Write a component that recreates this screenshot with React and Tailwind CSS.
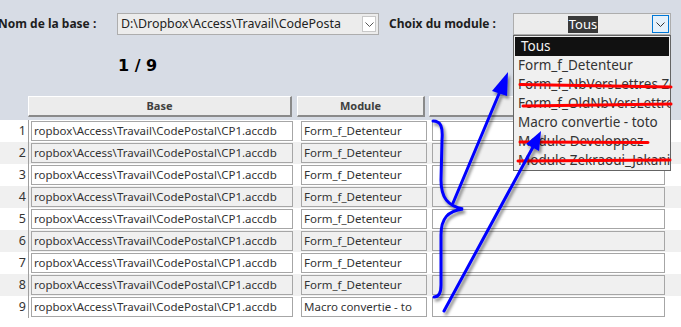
import React from 'react';

const rows = [
  { n: 1, module: 'Form_f_Detenteur' },
  { n: 2, module: 'Form_f_Detenteur' },
  { n: 3, module: 'Form_f_Detenteur' },
  { n: 4, module: 'Form_f_Detenteur' },
  { n: 5, module: 'Form_f_Detenteur' },
  { n: 6, module: 'Form_f_Detenteur' },
  { n: 7, module: 'Form_f_Detenteur' },
  { n: 8, module: 'Form_f_Detenteur' },
  { n: 9, module: 'Macro convertie - to' },
];

const modules = [
  'Tous',
  'Form_f_Detenteur',
  'Form_f_NbVersLettres Zekraoui',
  'Form_f_OldNbVersLettres',
  'Macro convertie - toto',
  'Module Developpez',
  'Module Zekraoui_Jakani',
];

function Chevron({ className }) {
  return (
    <svg width="9" height="5" viewBox="0 0 9 5" className={className}>
      <polyline points="0.5,0.5 4.5,4.5 8.5,0.5" fill="none" stroke="currentColor" strokeWidth="1" />
    </svg>
  );
}

function HeaderButton({ label, className }) {
  return (
    <div
      className={`h-[21px] flex items-center justify-center bg-[#ececec] border-t border-l border-t-white border-l-white border-r-2 border-b-2 border-r-[#8a8a8a] border-b-[#8a8a8a] text-[11px] font-bold text-[#404040] ${className}`}
    >
      {label}
    </div>
  );
}

export default function App() {
  return (
    <div className="relative w-[681px] h-[327px] overflow-hidden bg-white font-['Noto_Sans',sans-serif] text-[#333]">
      {/* Form header */}
      <div className="h-[120px] bg-[#d7dce5] flex flex-col">
        <div className="flex items-center pt-[13px]">
          <span className="-ml-[2px] w-[119px] shrink-0 text-[12px] font-bold text-[#1e1e1e]">Nom de la base :</span>
          <div className="w-[262px] h-[22px] flex items-center bg-[#ececec] border border-[#adadad]">
            <span className="flex-1 pl-[3px] text-[12.4px] text-[#222] whitespace-nowrap">
              D:\Dropbox\Access\Travail\CodePosta
            </span>
            <div className="w-[14px] h-[16px] mr-[2px] flex items-center justify-center bg-white border border-[#c8c8c8] text-[#555]">
              <Chevron />
            </div>
          </div>
          <span className="ml-[10px] w-[124px] shrink-0 text-[12px] font-bold text-[#1e1e1e]">Choix du module :</span>
          <div className="w-[158px] h-[22px] flex items-center bg-[#ececec] border border-[#adadad]">
            <div className="flex-1 flex justify-center">
              <span className="bg-[#3a3a3a] text-white text-[13px] px-[1px] leading-[17px]">Tous</span>
            </div>
            <div className="w-[17px] h-[18px] mr-[1px] flex items-center justify-center bg-[#e5f1fb] border border-[#0078d7] text-[#333]">
              <Chevron />
            </div>
          </div>
        </div>
        <div className="mt-[21px] h-[20px] pl-[118px] flex items-center font-['DejaVu_Sans',sans-serif] text-[16px] font-bold text-black">
          1 / 9
        </div>
        <div className="mt-[20px] flex">
          <HeaderButton label="Base" className="ml-[28px] w-[264px]" />
          <HeaderButton label="Module" className="ml-[5px] w-[128px]" />
          <HeaderButton label="" className="ml-[4px] w-[236px]" />
        </div>
      </div>

      {/* Records */}
      <div className="flex flex-col">
        {rows.map((r) => (
          <div key={r.n} className={`h-[22px] flex ${r.n % 2 === 0 ? 'bg-[#f0f0f0]' : 'bg-white'}`}>
            <div className="w-[29px] shrink-0 border-r border-[#a0a0a0] flex items-center justify-end pr-[2px] text-[12.5px]">
              {r.n}
            </div>
            <div className="ml-[2px] mt-[1px] w-[262px] h-[20px] border border-[#a6a6a6] flex items-center pl-[2px] text-[11.5px] whitespace-nowrap">
              ropbox\Access\Travail\CodePostal\CP1.accdb
            </div>
            <div className="ml-[8px] mt-[1px] w-[126px] h-[20px] border border-[#a6a6a6] flex items-center pl-[2px] text-[11.5px] whitespace-nowrap">
              {r.module}
            </div>
            <div className="ml-[5px] mt-[1px] w-[233px] h-[20px] border border-[#a6a6a6]" />
          </div>
        ))}
      </div>

      {/* Open module list */}
      <div className="absolute left-[513px] top-[35px] w-[158px] h-[136px] bg-[#f0f0f0] border border-[#646464] pt-[1px] px-[1px] overflow-hidden">
        {modules.map((m, i) => (
          <div
            key={m}
            className={`h-[19px] flex items-center whitespace-nowrap text-[13.5px] ${
              i === 0 ? 'bg-[#111] text-[#f4f4f4] pl-[6px]' : 'pl-[3px] text-[#333]'
            }`}
          >
            {m}
          </div>
        ))}
      </div>

      {/* Annotations */}
      <svg className="absolute inset-0 pointer-events-none" width="681" height="327" viewBox="0 0 681 327">
        <defs>
          <filter id="sh" x="-20%" y="-20%" width="140%" height="140%">
            <feDropShadow dx="2" dy="3" stdDeviation="1.5" floodColor="#000" floodOpacity="0.45" />
          </filter>
        </defs>
        <g stroke="#ff0000" strokeWidth="3" strokeLinecap="round" fill="none">
          <line x1="520" y1="84.5" x2="671" y2="87" />
          <line x1="523" y1="106" x2="671" y2="104" />
          <line x1="520" y1="142" x2="648" y2="142.5" />
          <line x1="518" y1="161" x2="670" y2="160" />
        </g>
        <g filter="url(#sh)">
          <path
            d="M433,121 C441,121 443,127 442,140 L441,180 C441,198 448,206 463,209 C448,211 441,218 441,235 L441,285 C441,294 438,297 434,297"
            fill="none"
            stroke="#0000ff"
            strokeWidth="3"
            strokeLinecap="round"
          />
          <line x1="453" y1="203" x2="501" y2="89" stroke="#0000ff" strokeWidth="3" strokeLinecap="round" />
          <polygon points="508,72 492,91 507,96" fill="#0000ff" />
          <line x1="444" y1="311" x2="533" y2="147" stroke="#0000ff" strokeWidth="3" strokeLinecap="round" />
          <polygon points="541,131 526,144 539,151" fill="#0000ff" />
        </g>
      </svg>
    </div>
  );
}
